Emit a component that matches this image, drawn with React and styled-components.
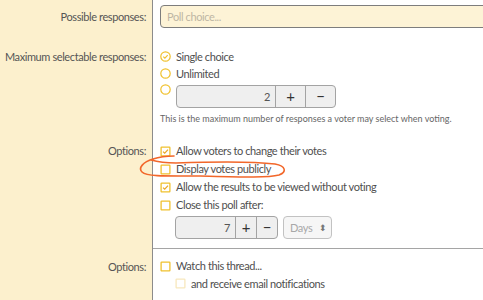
import styled, { createGlobalStyle } from 'styled-components';

const Global = createGlobalStyle`
  html, body {
    margin: 0;
    height: 300px;
    overflow: hidden;
    background: #fff;
  }
  body {
    font-family: Lato, "Open Sans", sans-serif;
    font-size: 11px;
    letter-spacing: -0.4px;
    color: #505050;
  }
`;

export default function App() {
  return (
    <>
      <Global />
      <Form>
        <Row>
          <Label $pt={8}>Possible responses:</Label>
          <Field $pt={5} $pb={10}>
            <TextInput placeholder="Poll choice..." />
          </Field>
        </Row>

        <Row>
          <Label $pt={10} $lh={17}>Maximum selectable responses:</Label>
          <Field $pt={10} $pb={7}>
            <Item $lh={17}><Radio checked />Single choice</Item>
            <Item $lh={17}><Radio />Unlimited</Item>
            <Item $lh={17} $top>
              <Radio $mt={2} />
              <Spinner value="2" width={160} btn={30} />
            </Item>
            <Hint>This is the maximum number of responses a voter may select when voting.</Hint>
          </Field>
        </Row>

        <Row>
          <Label $pt={10}>Options:</Label>
          <Field $pt={10} $pb={10}>
            <Item><Check checked />Allow voters to change their votes</Item>
            <Item><Check />Display votes publicly</Item>
            <Item><Check checked />Allow the results to be viewed without voting</Item>
            <Item><Check />Close this poll after:</Item>
            <Sub>
              <Spinner value="7" width={103} btn={21} />
              <Select>Days<Arrows>⬍</Arrows></Select>
            </Sub>
          </Field>
        </Row>

        <Row $grow>
          <Label $pt={9}>Options:</Label>
          <Field $pt={8} $pb={0} $topLine>
            <Item><Check />Watch this thread...</Item>
            <Item $lh={17} $indent><Check faded />and receive email notifications</Item>
          </Field>
        </Row>

        <Scribble viewBox="0 0 483 300" width="483" height="300">
          <path
            d="M174,156 C166,156 159,157 153,159 C143,162 138,168 142,172 C147,177 170,176 200,176 C240,177 268,178 279,175 C287,172 286,166 275,164 C250,161 205,162 176,163 C166,163 158,162 151,160"
            fill="none"
            stroke="#f2672a"
            strokeWidth="1.6"
            strokeLinecap="round"
          />
        </Scribble>
      </Form>
    </>
  );
}

function Radio({ checked, $mt }) {
  return (
    <Mark $mt={$mt} viewBox="0 0 11 11" width="11" height="11">
      <circle cx="5.5" cy="5.5" r="4.7" fill="#fff" stroke="#f0c12e" strokeWidth="1.2" />
      {checked && (
        <path d="M3.3,5.6 L4.9,7.1 L7.7,4.1" fill="none" stroke="#f0c12e" strokeWidth="1.2" />
      )}
    </Mark>
  );
}

function Check({ checked, faded }) {
  const c = faded ? '#f7e8bd' : '#f0c12e';
  return (
    <Mark viewBox="0 0 11 11" width="11" height="11">
      <rect x="1.1" y="1.1" width="8.8" height="8.8" rx="0.6" fill="#fff" stroke={c} strokeWidth="1.3" />
      {checked && (
        <path d="M3,5.6 L4.7,7.2 L8,3.6" fill="none" stroke="#e9a825" strokeWidth="1.2" />
      )}
    </Mark>
  );
}

function Spinner({ value, width, btn }) {
  return (
    <Stepper style={{ width }}>
      <Num>{value}</Num>
      <StepBtn style={{ width: btn }}>+</StepBtn>
      <StepBtn style={{ width: btn }}>−</StepBtn>
    </Stepper>
  );
}

const Form = styled.div`
  position: relative;
  display: flex;
  flex-direction: column;
  height: 300px;
  overflow: hidden;
`;

const Row = styled.div`
  display: flex;
  flex: ${(p) => (p.$grow ? 1 : 'none')};
`;

const Label = styled.div`
  flex: none;
  box-sizing: border-box;
  width: 153px;
  padding: ${(p) => p.$pt}px 6px 0 0;
  line-height: ${(p) => p.$lh || 18}px;
  text-align: right;
  background: #fcf0cd;
  border-right: 1px solid #8c8c8c;
  color: #555;
  white-space: nowrap;
`;

const Field = styled.div`
  flex: 1;
  min-width: 0;
  padding: ${(p) => p.$pt}px 0 ${(p) => p.$pb}px 7px;
  border-top: ${(p) => (p.$topLine ? '1px solid #a5a5a5' : 'none')};
  margin-top: ${(p) => (p.$topLine ? '-1px' : '0')};
`;

const TextInput = styled.input`
  display: block;
  box-sizing: border-box;
  width: calc(100% + 10px);
  height: 23px;
  padding: 0 6px;
  border: 1px solid #7d7d7d;
  border-radius: 4px;
  background: #fdf3d6;
  font: inherit;
  letter-spacing: inherit;
  color: #505050;
  outline: none;

  &::placeholder {
    color: #bdb6a4;
  }
`;

const Item = styled.div`
  display: flex;
  align-items: ${(p) => (p.$top ? 'flex-start' : 'center')};
  gap: 5px;
  line-height: ${(p) => p.$lh || 18}px;
  padding-left: ${(p) => (p.$indent ? '15px' : '0')};
  white-space: nowrap;
  color: #4f4f4f;
`;

const Mark = styled.svg`
  flex: none;
  display: block;
  margin-top: ${(p) => (p.$mt ? p.$mt + 'px' : 0)};
`;

const Stepper = styled.div`
  display: flex;
  box-sizing: border-box;
  height: 23px;
  margin-top: 3px;
  border: 1px solid #a3a3a3;
  border-radius: 4px;
  background: #efefef;
  overflow: hidden;
`;

const Num = styled.div`
  flex: 1;
  text-align: right;
  padding-right: 5px;
  line-height: 21px;
  color: #555;
`;

const StepBtn = styled.div`
  flex: none;
  box-sizing: border-box;
  border-left: 1px solid #a3a3a3;
  text-align: center;
  line-height: 20px;
  font-size: 15px;
  color: #333;
`;

const Hint = styled.div`
  margin-top: 4px;
  font-size: 9px;
  letter-spacing: 0;
  line-height: 13px;
  color: #666;
  white-space: nowrap;
`;

const Sub = styled.div`
  display: flex;
  gap: 5px;
  padding-left: 15px;
  margin-top: 2px;

  & > div:first-child {
    margin-top: 0;
  }
`;

const Select = styled.div`
  position: relative;
  box-sizing: border-box;
  width: 49px;
  height: 23px;
  padding-left: 6px;
  line-height: 21px;
  border: 1px solid #c2c2c2;
  border-radius: 4px;
  background: #f6f6f6;
  color: #a8a8a8;
`;

const Arrows = styled.span`
  position: absolute;
  right: 4px;
  top: 0;
  font-size: 9px;
  color: #777;
`;

const Scribble = styled.svg`
  position: absolute;
  left: 0;
  top: 0;
  pointer-events: none;
`;
